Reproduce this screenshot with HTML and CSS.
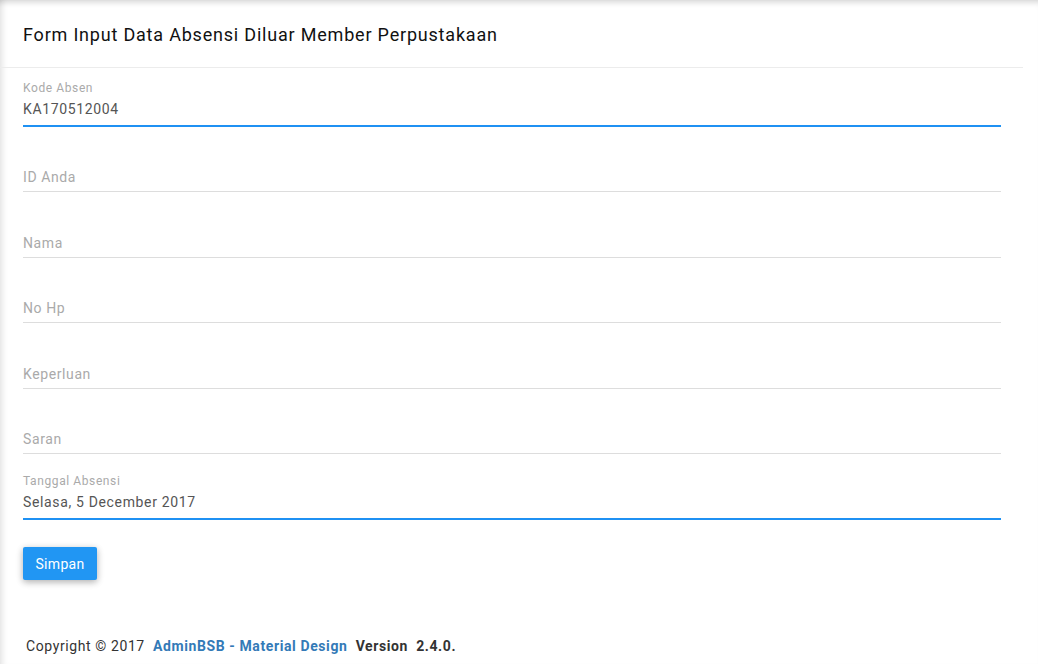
FILE: index.html
```html
<!DOCTYPE html>
<html>
<head>
<meta charset="utf-8">
<link rel="stylesheet" href="styles.css">
</head>
<body>
<div class="page">
  <div class="card">
    <div class="card-header">
      <h2 class="card-title">Form Input Data Absensi Diluar Member Perpustakaan</h2>
    </div>
    <div class="card-body">
      <div class="field field-focused field-first">
        <div class="field-label">Kode Absen</div>
        <div class="field-value">KA170512004</div>
      </div>
      <div class="field field-empty field-second">
        <div class="field-placeholder">ID Anda</div>
      </div>
      <div class="field field-empty">
        <div class="field-placeholder">Nama</div>
      </div>
      <div class="field field-empty">
        <div class="field-placeholder">No Hp</div>
      </div>
      <div class="field field-empty">
        <div class="field-placeholder">Keperluan</div>
      </div>
      <div class="field field-empty">
        <div class="field-placeholder">Saran</div>
      </div>
      <div class="field field-focused field-date">
        <div class="field-label">Tanggal Absensi</div>
        <div class="field-value">Selasa, 5 December 2017</div>
      </div>
      <button class="btn-save" type="button">Simpan</button>
    </div>
  </div>
  <div class="footer">
    Copyright © 2017&nbsp; <a class="footer-link" href="#">AdminBSB - Material Design</a>&nbsp; <b class="footer-version">Version&nbsp; 2.4.0.</b>
  </div>
</div>
</body>
</html>
```
FILE: styles.css
```css
html, body {
  margin: 0;
  padding: 0;
  background: #fff;
}
body {
  font-family: Roboto, "Noto Sans", "Liberation Sans", sans-serif;
  width: 1038px;
  height: 664px;
  overflow: hidden;
}
.page {
  position: relative;
  height: 664px;
  box-shadow: inset 7px 0 6px -5px rgba(0, 0, 0, 0.12), inset 0 7px 6px -5px rgba(0, 0, 0, 0.18);
}
.card {
  width: 1023px;
}
.card-header {
  border-bottom: 1px solid #ececec;
  display: flex;
  align-items: center;
  padding-left: 23px;
  box-sizing: border-box;
  height: 68px;
}
.card-title {
  margin: 0;
  font-size: 18px;
  font-weight: 400;
  color: #111;
  line-height: 24px;
  padding-top: 2px;
  letter-spacing: 0.8px;
}
.card-body {
  padding: 10px 22px 0 23px;
}
.field {
  display: flex;
  flex-direction: column;
}
.field-focused {
  border-bottom: 2px solid #1f91f3;
  padding-bottom: 6px;
}
.field-empty {
  border-bottom: 1px solid #dddddd;
  padding-bottom: 4px;
  margin-top: 39.6px;
}
.field-second {
  margin-top: 39px;
}
.field-date {
  margin-top: 17px;
}
.field-label {
  font-size: 12px;
  line-height: 16px;
  color: #aaaaaa;
  margin-top: 2px;
  margin-bottom: 2px;
  letter-spacing: 0.6px;
}
.field-value {
  font-size: 14px;
  line-height: 20px;
  color: #555555;
  padding-top: 1px;
  letter-spacing: 0.65px;
}
.field-placeholder {
  font-size: 14px;
  line-height: 20px;
  color: #aaaaaa;
  padding-top: 1px;
  letter-spacing: 0.6px;
}
.btn-save {
  align-self: flex-start;
  margin-top: 27px;
  height: 33px;
  padding: 0 12.5px;
  border: none;
  border-radius: 2px;
  background: #2196f3;
  color: #fff;
  font-family: Roboto, "Noto Sans", "Liberation Sans", sans-serif;
  font-size: 14px;
  letter-spacing: 0.3px;
  box-shadow: 0 2px 6px rgba(0, 0, 0, 0.22), 0 2px 8px rgba(0, 0, 0, 0.12);
  cursor: pointer;
}
.footer {
  padding: 56px 0 0 26px;
  font-size: 14px;
  line-height: 20px;
  color: #333;
  letter-spacing: 0.6px;
}
.footer-link {
  color: #337ab7;
  font-weight: 700;
  text-decoration: none;
}
.footer-version {
  color: #333;
}
```
